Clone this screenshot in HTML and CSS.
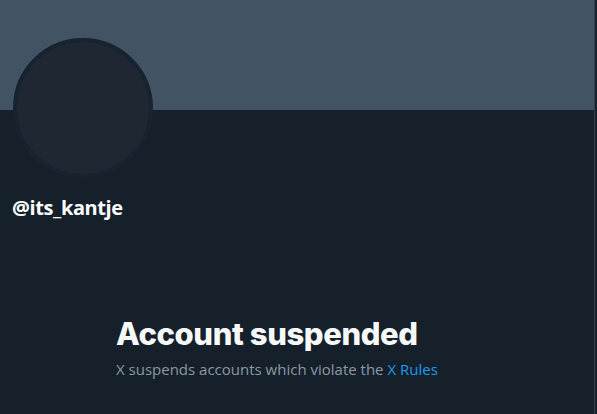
FILE: index.html
```html
<!DOCTYPE html>
<html>
<head>
<meta charset="utf-8">
<link rel="stylesheet" href="styles.css">
</head>
<body>
<div class="page">
  <main class="column">
    <div class="banner"></div>
    <div class="profile">
      <div class="avatar"></div>
      <div class="handle">@its_kantje</div>
    </div>
    <section class="notice">
      <h1 class="title">Account suspended</h1>
      <p class="desc">X suspends accounts which violate the <a class="link" href="#">X Rules</a></p>
    </section>
  </main>
</div>
</body>
</html>
```
FILE: styles.css
```css
html, body {
  margin: 0;
  padding: 0;
  background: #15202b;
  height: 100%;
}
.page {
  display: flex;
  height: 414px;
  overflow: hidden;
}
.column {
  width: 594px;
  border-right: 1px solid #38444d;
  display: flex;
  flex-direction: column;
}
.banner {
  height: 110px;
  background: #425364;
}
.profile {
  padding: 0 12px 0 13px;
}
.avatar {
  width: 132px;
  height: 132px;
  margin-top: -72px;
  border-radius: 50%;
  background: #1e2732;
  border: 4px solid #172330;
}
.handle {
  margin-top: 17px;
  margin-left: -1px;
  font-family: "Open Sans", sans-serif;
  font-weight: 700;
  font-size: 20px;
  line-height: 26px;
  color: #ffffff;
  letter-spacing: -0.4px;
}
.notice {
  padding-left: 116px;
  margin-top: 95px;
}
.title {
  margin: 0;
  font-family: Inter, sans-serif;
  font-weight: 800;
  font-size: 31px;
  line-height: 36px;
  color: #f7f9f9;
  letter-spacing: -0.4px;
}
.desc {
  margin: 7px 0 0;
  font-family: "Open Sans", sans-serif;
  font-size: 15px;
  line-height: 20px;
  color: #8b98a5;
}
.link {
  color: #1d9bf0;
  text-decoration: none;
}
```
